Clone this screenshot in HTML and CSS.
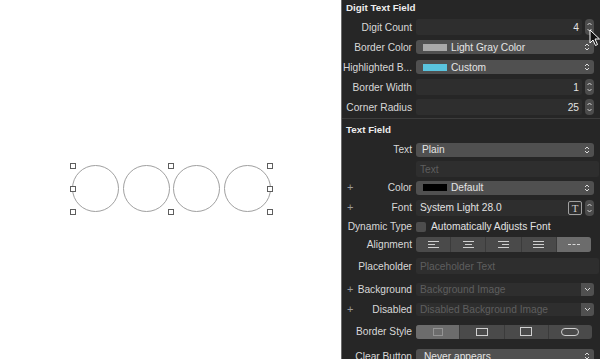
FILE: index.html
```html
<!DOCTYPE html>
<html>
<head>
<meta charset="utf-8">
<link rel="stylesheet" href="styles.css">
</head>
<body>
<main class="canvas">
  <div class="selection">
    <div class="circles">
      <span class="circle"></span><span class="circle"></span><span class="circle"></span><span class="circle"></span>
    </div>
    <span class="handle tl"></span><span class="handle tm"></span><span class="handle tr"></span>
    <span class="handle ml"></span><span class="handle mr"></span>
    <span class="handle bl"></span><span class="handle bm"></span><span class="handle br"></span>
  </div>
</main>
<aside class="inspector">
  <div class="title">Digit Text Field</div>
  <div class="group first">
    <div class="row"><div class="lbl">Digit Count</div><div class="ctl"><div class="field num">4</div><span class="stepper"><svg width="9" height="16" viewBox="0 0 9 16"><path d="M2.5 6 L4.5 4 L6.5 6 M2.5 10 L4.5 12 L6.5 10" fill="none" stroke="#d0d0d0" stroke-width="1"/></svg></span></div></div>
    <div class="row"><div class="lbl">Border Color</div><div class="ctl"><div class="popup"><span class="swatch gray"></span><span class="val">Light Gray Color</span><svg class="chev" width="6" height="10" viewBox="0 0 6 10"><path d="M1 4 L3 2 L5 4 M1 6 L3 8 L5 6" fill="none" stroke="#dcdcdc" stroke-width="1"/></svg></div></div></div>
    <div class="row"><div class="lbl">Highlighted B...</div><div class="ctl"><div class="popup"><span class="swatch cyan"></span><span class="val">Custom</span><svg class="chev" width="6" height="10" viewBox="0 0 6 10"><path d="M1 4 L3 2 L5 4 M1 6 L3 8 L5 6" fill="none" stroke="#dcdcdc" stroke-width="1"/></svg></div></div></div>
    <div class="row"><div class="lbl">Border Width</div><div class="ctl"><div class="field num">1</div><span class="stepper"><svg width="9" height="16" viewBox="0 0 9 16"><path d="M2.5 6 L4.5 4 L6.5 6 M2.5 10 L4.5 12 L6.5 10" fill="none" stroke="#d0d0d0" stroke-width="1"/></svg></span></div></div>
    <div class="row"><div class="lbl">Corner Radius</div><div class="ctl"><div class="field num">25</div><span class="stepper"><svg width="9" height="16" viewBox="0 0 9 16"><path d="M2.5 6 L4.5 4 L6.5 6 M2.5 10 L4.5 12 L6.5 10" fill="none" stroke="#d0d0d0" stroke-width="1"/></svg></span></div></div>
  </div>
  <div class="sep"></div>
  <div class="title second">Text Field</div>
  <div class="group">
    <div class="row h21"><div class="lbl">Text</div><div class="ctl"><div class="popup"><span class="val pad">Plain</span><svg class="chev" width="6" height="10" viewBox="0 0 6 10"><path d="M1 4 L3 2 L5 4 M1 6 L3 8 L5 6" fill="none" stroke="#dcdcdc" stroke-width="1"/></svg></div></div></div>
    <div class="row h18"><div class="lbl"></div><div class="ctl wide"><div class="field ph">Text</div></div></div>
    <div class="row h19"><div class="lbl plus"><span>+</span><span>Color</span></div><div class="ctl"><div class="popup"><span class="swatch black"></span><span class="val">Default</span><svg class="chev" width="6" height="10" viewBox="0 0 6 10"><path d="M1 4 L3 2 L5 4 M1 6 L3 8 L5 6" fill="none" stroke="#dcdcdc" stroke-width="1"/></svg></div></div></div>
    <div class="row h21"><div class="lbl plus"><span>+</span><span>Font</span></div><div class="ctl"><div class="field font"><span class="val">System Light 28.0</span><span class="tbtn">T</span></div><span class="stepper"><svg width="9" height="16" viewBox="0 0 9 16"><path d="M2.5 6 L4.5 4 L6.5 6 M2.5 10 L4.5 12 L6.5 10" fill="none" stroke="#d0d0d0" stroke-width="1"/></svg></span></div></div>
    <div class="row h17"><div class="lbl">Dynamic Type</div><div class="ctl"><span class="check"></span><span class="checktext">Automatically Adjusts Font</span></div></div>
    <div class="row h19"><div class="lbl">Alignment</div><div class="ctl"><div class="seg five">
      <span class="s"><svg width="11" height="7" viewBox="0 0 11 7"><path d="M0 0.5 H11 M0 3.5 H7 M0 6.5 H11" stroke="#cfcfcf"/></svg></span>
      <span class="s"><svg width="11" height="7" viewBox="0 0 11 7"><path d="M0 0.5 H11 M2 3.5 H9 M0 6.5 H11" stroke="#cfcfcf"/></svg></span>
      <span class="s"><svg width="11" height="7" viewBox="0 0 11 7"><path d="M0 0.5 H11 M4 3.5 H11 M0 6.5 H11" stroke="#cfcfcf"/></svg></span>
      <span class="s"><svg width="11" height="7" viewBox="0 0 11 7"><path d="M0 0.5 H11 M0 3.5 H11 M0 6.5 H11" stroke="#cfcfcf"/></svg></span>
      <span class="s on"><svg width="12" height="3" viewBox="0 0 12 3"><path d="M0 1.5 H3 M4.5 1.5 H7.5 M9 1.5 H12" stroke="#d8d8d8"/></svg></span>
    </div></div></div>
    <div class="row h24"><div class="lbl">Placeholder</div><div class="ctl wide"><div class="field ph">Placeholder Text</div></div></div>
    <div class="row h22"><div class="lbl plus"><span>+</span><span>Background</span></div><div class="ctl"><div class="combo"><span class="val ph">Background Image</span><span class="down"><svg width="7" height="5" viewBox="0 0 7 5"><path d="M1 1 L3.5 3.5 L6 1" fill="none" stroke="#dcdcdc"/></svg></span></div></div></div>
    <div class="row h18"><div class="lbl plus"><span>+</span><span>Disabled</span></div><div class="ctl"><div class="combo"><span class="val ph">Disabled Background Image</span><span class="down"><svg width="7" height="5" viewBox="0 0 7 5"><path d="M1 1 L3.5 3.5 L6 1" fill="none" stroke="#dcdcdc"/></svg></span></div></div></div>
    <div class="row h27"><div class="lbl">Border Style</div><div class="ctl"><div class="seg four">
      <span class="s on"><svg width="10" height="8" viewBox="0 0 10 8"><rect x="0.5" y="0.5" width="9" height="7" fill="none" stroke="#bdbdbd" stroke-dasharray="1 1"/></svg></span>
      <span class="s"><svg width="12" height="8" viewBox="0 0 12 8"><rect x="0.5" y="0.5" width="11" height="7" fill="none" stroke="#d0d0d0"/></svg></span>
      <span class="s"><svg width="12" height="9" viewBox="0 0 12 9"><rect x="0.5" y="0.5" width="11" height="8" fill="none" stroke="#d0d0d0"/></svg></span>
      <span class="s"><svg width="18" height="8" viewBox="0 0 18 8"><rect x="0.5" y="0.5" width="17" height="7" rx="3.5" fill="none" stroke="#d0d0d0"/></svg></span>
    </div></div></div>
    <div class="row h22"><div class="lbl">Clear Button</div><div class="ctl"><div class="popup"><span class="val pad2">Never appears</span><svg class="chev" width="6" height="10" viewBox="0 0 6 10"><path d="M1 4 L3 2 L5 4 M1 6 L3 8 L5 6" fill="none" stroke="#dcdcdc" stroke-width="1"/></svg></div></div></div>
  </div>
</aside>
<svg class="cursor" width="12" height="18" viewBox="0 0 12 18"><path d="M1 1 L1 14 L4 11 L6.5 16.5 L8.5 15.5 L6 10 L10.5 10 Z" fill="#111" stroke="#fff" stroke-width="1" stroke-linejoin="round"/></svg>
</body>
</html>
```

FILE: styles.css
```css
* { box-sizing: border-box; }
html, body { margin: 0; padding: 0; }
body {
  width: 600px;
  height: 359px;
  overflow: hidden;
  display: flex;
  position: relative;
  font-family: "Liberation Sans", Arial, sans-serif;
  background: #ffffff;
}
.canvas {
  width: 341px;
  flex: none;
  background: #ffffff;
  position: relative;
}
.selection {
  position: absolute;
  left: 73px;
  top: 166px;
  width: 197px;
  height: 46px;
}
.circles {
  display: flex;
  justify-content: space-between;
  width: 199px;
  margin: -1px 0 0 -1px;
}
.circle {
  width: 47px;
  height: 47px;
  border: 1px solid #a0a0a0;
  border-radius: 50%;
}
.handle {
  position: absolute;
  width: 6px;
  height: 6px;
  border: 1px solid #5e5e5e;
  background: #fff;
}
.tl { left: -3px; top: -3px; }
.tm { left: calc(50% - 4px); top: -3px; }
.tr { right: -3px; top: -3px; }
.ml { left: -3px; top: calc(50% - 3px); }
.mr { right: -3px; top: calc(50% - 3px); }
.bl { left: -3px; bottom: -3px; }
.bm { left: calc(50% - 4px); bottom: -3px; }
.br { right: -3px; bottom: -3px; }

.inspector {
  flex: 1;
  background: #262626;
  border-left: 1px solid #6b6b6b;
  color: #dadada;
  font-size: 10.2px;
  overflow: hidden;
}
.title {
  height: 15px;
  padding-left: 4px;
  display: flex;
  align-items: center;
  font-weight: bold;
  font-size: 9.8px;
  color: #ededed;
}
.title.second { height: 20px; }
.group.first { padding-top: 2px; }
.sep {
  height: 1px;
  margin-top: 1px;
  background: #3c3c3c;
}
.row {
  display: grid;
  grid-template-columns: 70px 178px;
  column-gap: 4px;
  align-items: center;
  height: 20px;
}
.h17 { height: 17px; }
.h18 { height: 18px; }
.h19 { height: 19px; }
.h21 { height: 21px; }
.h22 { height: 22px; }
.h24 { height: 24px; }
.h27 { height: 27px; }
.lbl {
  display: flex;
  justify-content: flex-end;
  white-space: nowrap;
  color: #d8d8d8;
}
.lbl.plus {
  justify-content: space-between;
  padding-left: 5px;
}
.lbl.plus span:first-child { color: #9a9a9a; font-size: 11px; line-height: 10px; }
.ctl {
  display: flex;
  align-items: center;
  gap: 3px;
}
.ctl.wide { margin-right: -5px; }
.field {
  flex: 1;
  height: 16px;
  background: #2e2e2e;
  border-radius: 2px;
  display: flex;
  align-items: center;
  padding: 0 4px;
  color: #e2e2e2;
  white-space: nowrap;
}
.field.num { justify-content: flex-end; padding-right: 3px; }
.field.ph, .ph { color: #5e5e5e; }
.field.font { padding-right: 0; }
.field.font .val { flex: 1; }
.tbtn {
  width: 14px;
  height: 14px;
  border: 1px solid #a0a0a0;
  border-radius: 2px;
  font-family: "Liberation Serif", serif;
  font-size: 11px;
  color: #cfcfcf;
  display: flex;
  align-items: center;
  justify-content: center;
}
.stepper {
  width: 9px;
  height: 16px;
  border-radius: 4px;
  background: #4c4c4c;
  display: flex;
}
.popup {
  flex: 1;
  height: 14px;
  background: #505050;
  border-radius: 3px;
  display: flex;
  align-items: center;
  padding: 0 4px 0 0;
  color: #e4e4e4;
  white-space: nowrap;
}
.popup .val { flex: 1; }
.val.pad { padding-left: 6px; }
.val.pad2 { padding-left: 8px; }
.swatch {
  width: 24px;
  height: 7px;
  margin: 0 4px 0 7px;
  flex: none;
}
.swatch.gray { background: #a9a9a9; }
.swatch.cyan { background: #5ac4de; }
.swatch.black { background: #000; }
.check {
  width: 10px;
  height: 10px;
  border-radius: 2px;
  background: #4d4d4d;
  flex: none;
}
.checktext { margin-left: 2px; color: #e2e2e2; white-space: nowrap; }
.seg {
  flex: 1;
  display: flex;
  height: 15px;
  border-radius: 3px;
  overflow: hidden;
  background: #4a4a4a;
}
.seg.five { margin-right: 3px; }
.seg.four { height: 14px; margin-right: 2px; }
.seg .s {
  flex: 1;
  display: flex;
  align-items: center;
  justify-content: center;
  border-left: 1px solid #3b3b3b;
}
.seg .s:first-child { border-left: none; }
.seg .s.on { background: #6c6c6c; }
.combo {
  flex: 1;
  height: 13px;
  background: #2e2e2e;
  border-radius: 2px;
  display: flex;
  align-items: center;
  white-space: nowrap;
}
.combo .val { flex: 1; padding-left: 4px; }
.down {
  width: 13px;
  height: 13px;
  background: #505050;
  border-radius: 0 3px 3px 0;
  display: flex;
  align-items: center;
  justify-content: center;
}
.cursor {
  position: absolute;
  left: 589px;
  top: 29px;
}
```
